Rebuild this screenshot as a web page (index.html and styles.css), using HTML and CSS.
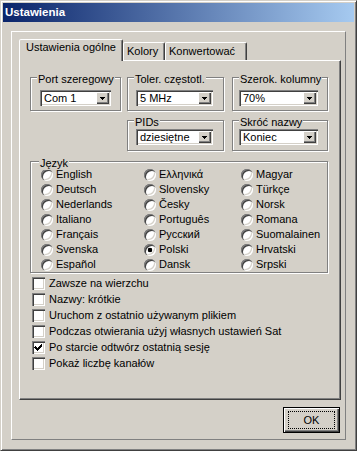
FILE: index.html
```html
<!DOCTYPE html>
<html lang="pl">
<head>
<meta charset="utf-8">
<title>Ustawienia</title>
<link rel="stylesheet" href="styles.css">
</head>
<body>
<div class="window">
  <div class="titlebar">Ustawienia</div>
  <div class="client">
    <div class="frame">
      <div class="tabs">
        <div class="tab tab-active">Ustawienia ogólne</div>
        <div class="tab tab-kolory">Kolory</div>
        <div class="tab tab-konw">Konwertować</div>
      </div>
      <div class="page">
        <div class="top-groups">
          <div class="group g-row1 g-col1">
            <span class="group-label">Port szeregowy</span>
            <div class="combo"><span class="combo-text">Com 1</span><span class="combo-btn"><svg width="5" height="3" viewBox="0 0 5 3"><path d="M0 0h5v1h-1v1h-1v1h-1v-1h-1v-1h-1z" fill="#000"/></svg></span></div>
          </div>
          <div class="group g-row1 g-col2">
            <span class="group-label">Toler. częstotl.</span>
            <div class="combo"><span class="combo-text">5 MHz</span><span class="combo-btn"><svg width="5" height="3" viewBox="0 0 5 3"><path d="M0 0h5v1h-1v1h-1v1h-1v-1h-1v-1h-1z" fill="#000"/></svg></span></div>
          </div>
          <div class="group g-row1 g-col3">
            <span class="group-label">Szerok. kolumny</span>
            <div class="combo"><span class="combo-text">70%</span><span class="combo-btn"><svg width="5" height="3" viewBox="0 0 5 3"><path d="M0 0h5v1h-1v1h-1v1h-1v-1h-1v-1h-1z" fill="#000"/></svg></span></div>
          </div>
          <div class="group g-row2 g-col2">
            <span class="group-label">PIDs</span>
            <div class="combo"><span class="combo-text">dziesiętne</span><span class="combo-btn"><svg width="5" height="3" viewBox="0 0 5 3"><path d="M0 0h5v1h-1v1h-1v1h-1v-1h-1v-1h-1z" fill="#000"/></svg></span></div>
          </div>
          <div class="group g-row2 g-col3">
            <span class="group-label">Skróć nazwy</span>
            <div class="combo"><span class="combo-text">Koniec</span><span class="combo-btn"><svg width="5" height="3" viewBox="0 0 5 3"><path d="M0 0h5v1h-1v1h-1v1h-1v-1h-1v-1h-1z" fill="#000"/></svg></span></div>
          </div>
        </div>

        <div class="group lang">
          <span class="group-label lang-label">Język</span>
          <div class="radio-grid">
            <div class="radio-item"><span class="radio"></span>English</div>
            <div class="radio-item"><span class="radio"></span>Deutsch</div>
            <div class="radio-item"><span class="radio"></span>Nederlands</div>
            <div class="radio-item"><span class="radio"></span>Italiano</div>
            <div class="radio-item"><span class="radio"></span>Français</div>
            <div class="radio-item"><span class="radio"></span>Svenska</div>
            <div class="radio-item"><span class="radio"></span>Español</div>
            <div class="radio-item"><span class="radio"></span>Ελληνικά</div>
            <div class="radio-item"><span class="radio"></span>Slovensky</div>
            <div class="radio-item"><span class="radio"></span>Česky</div>
            <div class="radio-item"><span class="radio"></span>Português</div>
            <div class="radio-item"><span class="radio"></span>Русский</div>
            <div class="radio-item"><span class="radio radio-on"></span>Polski</div>
            <div class="radio-item"><span class="radio"></span>Dansk</div>
            <div class="radio-item"><span class="radio"></span>Magyar</div>
            <div class="radio-item"><span class="radio"></span>Türkçe</div>
            <div class="radio-item"><span class="radio"></span>Norsk</div>
            <div class="radio-item"><span class="radio"></span>Romana</div>
            <div class="radio-item"><span class="radio"></span>Suomalainen</div>
            <div class="radio-item"><span class="radio"></span>Hrvatski</div>
            <div class="radio-item"><span class="radio"></span>Srpski</div>
          </div>
        </div>

        <div class="checklist">
          <div class="check-item"><span class="check"></span>Zawsze na wierzchu</div>
          <div class="check-item"><span class="check"></span>Nazwy: krótkie</div>
          <div class="check-item"><span class="check"></span>Uruchom z ostatnio używanym plikiem</div>
          <div class="check-item"><span class="check"></span>Podczas otwierania użyj własnych ustawień Sat</div>
          <div class="check-item"><span class="check"><svg width="13" height="13" viewBox="0 0 13 13" shape-rendering="crispEdges"><path d="M3 5h1v1h1v1h1v-1h1v-1h1v-1h1v-1h1v3h-1v1h-1v1h-1v1h-1v1h-1v-1h-1v-1h-1v-1h-1z" fill="#000"/></svg></span>Po starcie odtwórz ostatnią sesję</div>
          <div class="check-item"><span class="check"></span>Pokaż liczbę kanałów</div>
        </div>
      </div>
      <div class="buttons">
        <button class="btn btn-default"><span class="focus">OK</span></button>
      </div>
    </div>
  </div>
</div>
</body>
</html>
```
FILE: styles.css
```css
* { box-sizing: border-box; }

html, body {
  margin: 0;
  padding: 0;
  background: #d4d0c8;
}

body {
  font-family: "Liberation Sans", Arial, sans-serif;
  font-size: 11px;
  color: #000;
}

.window {
  width: 357px;
  height: 451px;
  display: flex;
  flex-direction: column;
  background: #d4d0c8;
  border: 1px solid;
  border-color: #d4d0c8 #404040 #404040 #d4d0c8;
  box-shadow: inset 1px 1px 0 #fff, inset -1px -1px 0 #808080;
  padding: 2px;
}

.titlebar {
  height: 19px;
  flex: none;
  background: linear-gradient(to right, #0a246a, #a6caf0);
  color: #fff;
  font-weight: bold;
  font-size: 11.5px;
  line-height: 19px;
  padding-left: 2px;
}

.client {
  flex: 1;
  padding: 9px 0 0 8px;
}

.frame {
  width: 335px;
  height: 409px;
  border: 1px solid;
  border-color: #fff #808080 #808080 #fff;
  padding: 7px 4px 6px 7px;
  display: flex;
  flex-direction: column;
}

.tabs {
  display: flex;
  align-items: flex-end;
  height: 21px;
  flex: none;
}

.tab {
  height: 18px;
  border: 1px solid;
  border-bottom: 0;
  border-color: #fff #404040 transparent #fff;
  border-radius: 2px 2px 0 0;
  box-shadow: inset -1px 0 0 #808080;
  line-height: 16px;
  padding-left: 3px;
  white-space: nowrap;
  background: #d4d0c8;
}

.tab-active {
  position: relative;
  z-index: 1;
  width: 104px;
  height: 22px;
  margin-bottom: -1px;
  line-height: 14px;
  padding-left: 6px;
}

.tab-kolory { width: 42px; }
.tab-konw { width: 82px; }

.page {
  height: 340px;
  flex: none;
  border: 1px solid;
  border-color: #fff #404040 #404040 #fff;
  box-shadow: inset -1px -1px 0 #808080;
  padding: 16px 10px 0 10px;
}

.top-groups {
  display: grid;
  grid-template-columns: 91px 97px 96px;
  grid-template-rows: 34px 31px;
  column-gap: 6px;
  row-gap: 9px;
}

.group {
  position: relative;
  border: 1px solid #808080;
  box-shadow: 1px 1px 0 #fff, inset 1px 1px 0 #fff;
}

.group-label {
  position: absolute;
  top: -6px;
  left: 6px;
  padding: 0 1px;
  line-height: 14px;
  background: #d4d0c8;
  white-space: nowrap;
}

.lang-label { left: 8px; }

.g-row1 { grid-row: 1; padding-top: 12px; padding-bottom: 4px; }
.g-row2 { grid-row: 2; padding-top: 8px; padding-bottom: 5px; }
.g-col1 { grid-column: 1; padding-left: 9px; padding-right: 9px; }
.g-col2 { grid-column: 2; padding-left: 8px; padding-right: 10px; }
.g-col3 { grid-column: 3; padding-left: 6px; padding-right: 9px; margin-left: 2px; width: 96px; }

.combo {
  display: flex;
  height: 16px;
  background: #fff;
  padding: 2px;
  box-shadow: inset 1px 1px 0 #808080, inset 2px 2px 0 #404040,
              inset -1px -1px 0 #fff, inset -2px -2px 0 #d4d0c8;
}

.combo-text {
  flex: 1;
  padding-left: 2px;
  line-height: 12px;
  white-space: nowrap;
  overflow: hidden;
}

.combo-btn {
  width: 13px;
  height: 12px;
  flex: none;
  display: flex;
  align-items: center;
  justify-content: center;
  background: #d4d0c8;
  box-shadow: inset 1px 1px 0 #fff, inset -1px -1px 0 #404040, inset -2px -2px 0 #808080;
  padding-top: 1px;
}

.combo-btn svg { display: block; }

.lang {
  margin-top: 10px;
  width: 298px;
  padding: 5px 0 0 10px;
}

.radio-grid {
  display: grid;
  grid-template-columns: 103px 97px 1fr;
  grid-template-rows: repeat(7, 15px);
  grid-auto-flow: column;
}

.radio-item {
  display: flex;
  align-items: center;
  line-height: 15px;
  white-space: nowrap;
}

.radio {
  width: 12px;
  height: 12px;
  flex: none;
  margin-right: 3px;
  border-radius: 50%;
  background: #fff;
  box-shadow: inset 1px 1px 0 #808080, inset 2px 2px 0 #404040,
              inset -1px -1px 0 #fff, inset -2px -2px 0 #d4d0c8;
}

.radio-on {
  background: radial-gradient(circle at 6px 6px, #000 0, #000 2px, #fff 2.6px);
}

.checklist {
  margin-top: 3px;
  padding-left: 2px;
}

.check-item {
  display: flex;
  align-items: flex-start;
  height: 16px;
  line-height: 15px;
  white-space: nowrap;
}

.check {
  width: 13px;
  height: 13px;
  flex: none;
  margin-top: 1px;
  margin-right: 4px;
  background: #fff;
  box-shadow: inset 1px 1px 0 #808080, inset 2px 2px 0 #404040,
              inset -1px -1px 0 #fff, inset -2px -2px 0 #d4d0c8;
}

.check svg { display: block; }

.buttons {
  display: flex;
  justify-content: flex-end;
  margin-top: 7px;
  padding-right: 1px;
}

.btn {
  width: 57px;
  height: 26px;
  margin: 0;
  padding: 3px 4px;
  border: 1px solid #000;
  background: #d4d0c8;
  box-shadow: inset 1px 1px 0 #fff, inset -1px -1px 0 #404040, inset -2px -2px 0 #808080;
  font: 11px "Liberation Sans", Arial, sans-serif;
  color: #000;
}

.focus {
  display: flex;
  align-items: center;
  justify-content: center;
  height: 100%;
  border: 1px dotted #000;
}
```
